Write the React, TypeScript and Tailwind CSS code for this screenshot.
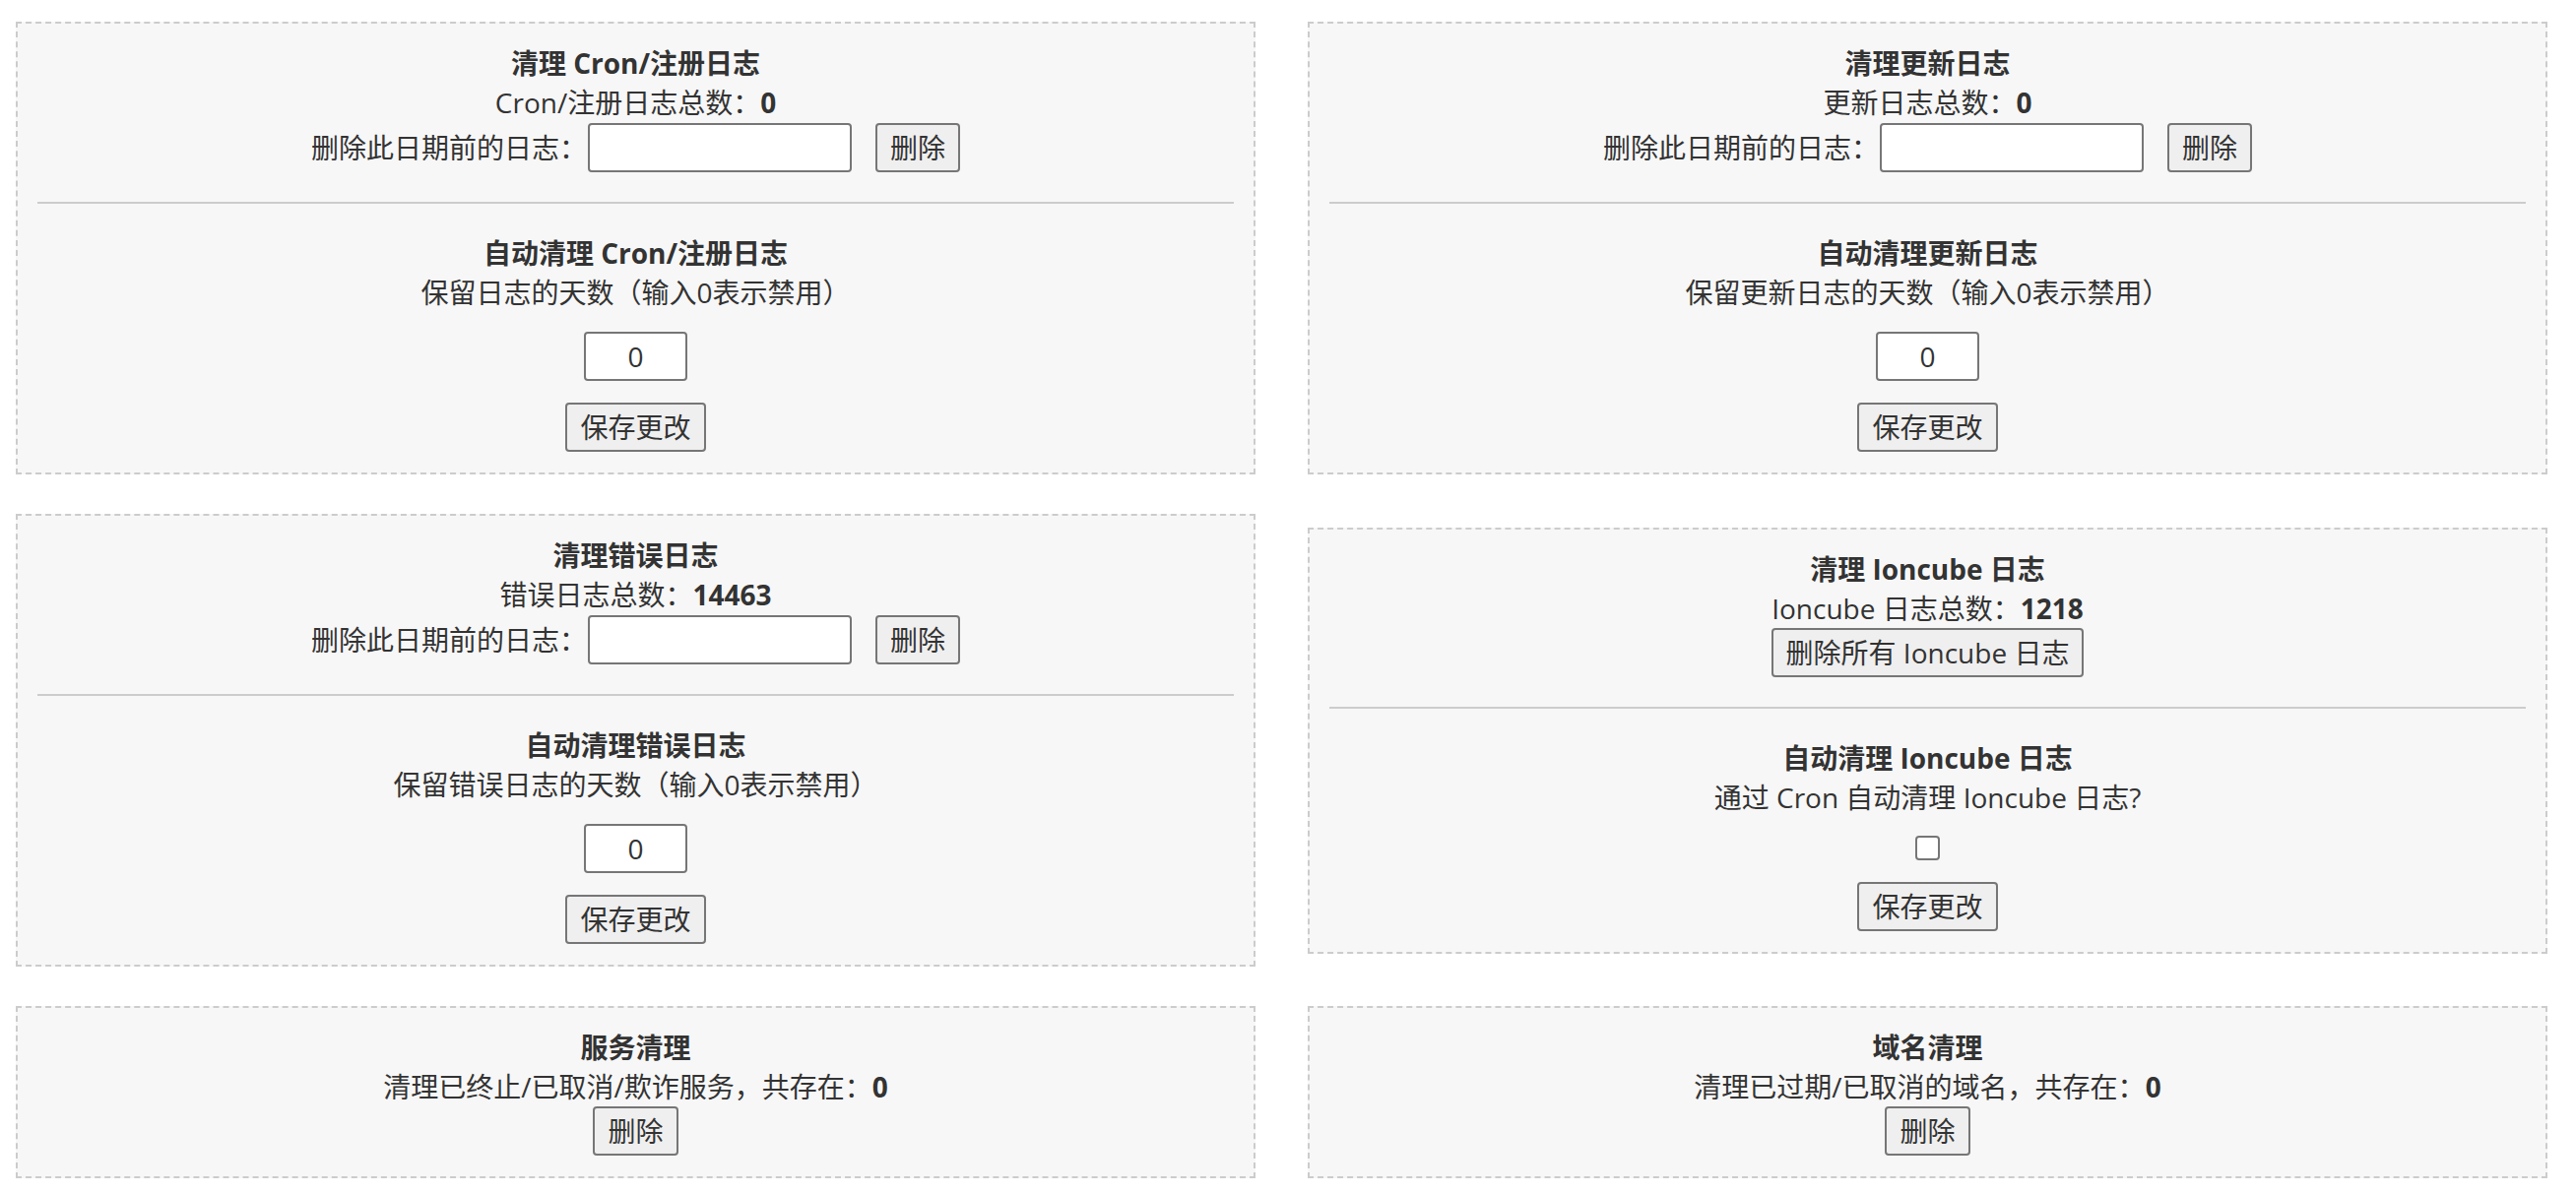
import React from "react"

const font = { fontFamily: '"Open Sans", "Noto Sans CJK SC", sans-serif' }

const Btn: React.FC<{ children: React.ReactNode; className?: string }> = ({ children, className = "" }) => (
  <button
    className={`h-[50px] px-[13px] border-2 border-[#767676] rounded-[4px] bg-[#efefef] text-[#333] text-[28px] leading-none inline-flex items-center justify-center ${className}`}
  >
    {children}
  </button>
)

const Box: React.FC<{ children: React.ReactNode }> = ({ children }) => (
  <div className="border-2 border-dashed border-[#ccc] bg-[#f7f7f7] px-[20px] pt-[20px] pb-[21px] text-center">
    {children}
  </div>
)

const Line: React.FC<{ children: React.ReactNode; bold?: boolean; className?: string }> = ({ children, bold, className = "" }) => (
  <div className={`h-[40px] leading-[40px] whitespace-nowrap ${bold ? "font-bold" : ""} ${className}`}>{children}</div>
)

const Divider = () => <div className="mt-[30px] h-[2px] bg-[#ccc]" />

interface LogBoxProps {
  title: string
  countLabel: string
  count: string
  autoTitle: string
  keepLabel: string
}

const LogBox: React.FC<LogBoxProps> = ({ title, countLabel, count, autoTitle, keepLabel }) => (
  <Box>
    <Line bold>{title}</Line>
    <Line>
      {countLabel}
      <b>{count}</b>
    </Line>
    <div className="mt-[1px] flex justify-center items-center h-[50px]">
      <span className="whitespace-nowrap">删除此日期前的日志：</span>
      <input type="text" className="ml-[1px] w-[268px] h-[50px] border-2 border-[#767676] rounded-[4px] bg-white" />
      <Btn className="ml-[24px]">删除</Btn>
    </div>
    <Divider />
    <Line bold className="mt-[30px]">{autoTitle}</Line>
    <Line>{keepLabel}</Line>
    <div className="mt-[20px] flex justify-center">
      <input
        type="text"
        defaultValue="0"
        className="w-[105px] h-[50px] border-2 border-[#767676] rounded-[4px] bg-white text-center text-[28px] text-[#333]"
      />
    </div>
    <div className="mt-[22px] flex justify-center">
      <Btn>保存更改</Btn>
    </div>
  </Box>
)

const IoncubeBox = () => (
  <Box>
    <Line bold>清理 Ioncube 日志</Line>
    <Line>
      Ioncube 日志总数：<b>1218</b>
    </Line>
    <div className="flex justify-center">
      <Btn>删除所有 Ioncube 日志</Btn>
    </div>
    <Divider />
    <Line bold className="mt-[30px]">自动清理 Ioncube 日志</Line>
    <Line>通过 Cron 自动清理 Ioncube 日志?</Line>
    <div className="mt-[19px] flex justify-center">
      <input
        type="checkbox"
        className="appearance-none w-[25px] h-[25px] border-2 border-[#767676] rounded-[4px] bg-white"
      />
    </div>
    <div className="mt-[22px] flex justify-center">
      <Btn>保存更改</Btn>
    </div>
  </Box>
)

const SimpleBox: React.FC<{ title: string; label: string; count: string }> = ({ title, label, count }) => (
  <Box>
    <Line bold>{title}</Line>
    <Line>
      {label}
      <b>{count}</b>
    </Line>
    <div className="flex justify-center">
      <Btn>删除</Btn>
    </div>
  </Box>
)

export default function App() {
  return (
    <div className="min-h-screen bg-white text-[#333] text-[28px] leading-[40px]" style={font}>
      <div className="grid grid-cols-2 gap-x-[53px] gap-y-[40px] items-center pl-[16px] pr-[29px] pt-[22px] pb-[14px]">
        <LogBox
          title="清理 Cron/注册日志"
          countLabel="Cron/注册日志总数："
          count="0"
          autoTitle="自动清理 Cron/注册日志"
          keepLabel="保留日志的天数（输入0表示禁用）"
        />
        <LogBox
          title="清理更新日志"
          countLabel="更新日志总数："
          count="0"
          autoTitle="自动清理更新日志"
          keepLabel="保留更新日志的天数（输入0表示禁用）"
        />
        <LogBox
          title="清理错误日志"
          countLabel="错误日志总数："
          count="14463"
          autoTitle="自动清理错误日志"
          keepLabel="保留错误日志的天数（输入0表示禁用）"
        />
        <IoncubeBox />
        <SimpleBox title="服务清理" label="清理已终止/已取消/欺诈服务，共存在：" count="0" />
        <SimpleBox title="域名清理" label="清理已过期/已取消的域名，共存在：" count="0" />
      </div>
    </div>
  )
}
